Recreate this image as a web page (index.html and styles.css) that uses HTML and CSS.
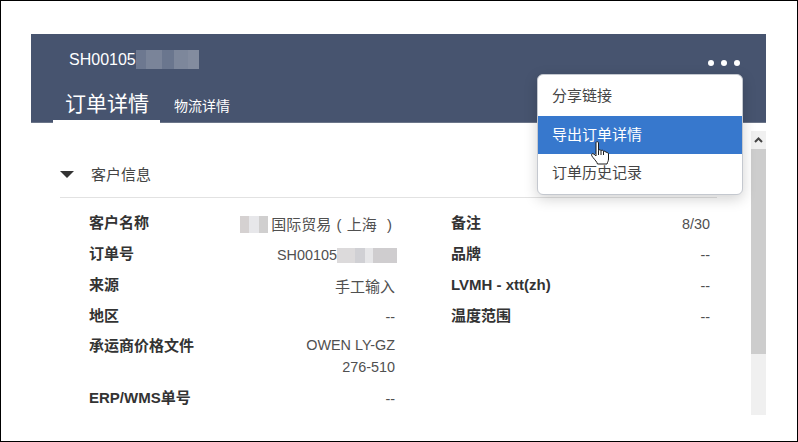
FILE: index.html
```html
<!DOCTYPE html>
<html lang="zh-CN">
<head>
<meta charset="utf-8">
<title>订单详情</title>
<link rel="stylesheet" href="styles.css">
</head>
<body>
<div class="frame">
  <div class="card">
    <header class="header">
      <div class="title-row">
        <span class="order-no">SH00105</span><span class="blur blur-head"></span>
        <div class="dots"><i></i><i></i><i></i></div>
      </div>
      <nav class="tabs">
        <a class="tab tab-active">订单详情</a>
        <a class="tab">物流详情</a>
      </nav>
    </header>
    <div class="body">
      <main class="content">
        <div class="section-head">
          <span class="caret"></span>
          <span class="section-title">客户信息</span>
        </div>
        <div class="columns">
          <div class="col col-left">
            <div class="row"><span class="label">客户名称</span><span class="value zh zh-name"><span class="blur blur-name"></span>国际贸易 ( 上海&nbsp; )</span></div>
            <div class="row"><span class="label">订单号</span><span class="value">SH00105<span class="blur blur-no"></span></span></div>
            <div class="row"><span class="label">来源</span><span class="value zh">手工输入</span></div>
            <div class="row"><span class="label">地区</span><span class="value">--</span></div>
            <div class="row row-tall"><span class="label">承运商价格文件</span><span class="value value-flush">OWEN LY-GZ<br>276-510</span></div>
            <div class="row"><span class="label">ERP/WMS单号</span><span class="value">--</span></div>
          </div>
          <div class="col col-right">
            <div class="row"><span class="label">备注</span><span class="value">8/30</span></div>
            <div class="row"><span class="label">品牌</span><span class="value">--</span></div>
            <div class="row"><span class="label">LVMH - xtt(zh)</span><span class="value">--</span></div>
            <div class="row"><span class="label">温度范围</span><span class="value">--</span></div>
          </div>
        </div>
      </main>
      <aside class="scrollbar">
        <div class="scroll-up"><svg width="9" height="6" viewBox="0 0 9 6"><path d="M1 5 L4.5 1.5 L8 5" fill="none" stroke="#444" stroke-width="2"/></svg></div>
        <div class="scroll-thumb"></div>
      </aside>
    </div>
    <div class="menu">
      <div class="menu-item">分享链接</div>
      <div class="menu-item menu-item-active">导出订单详情</div>
      <div class="menu-item">订单历史记录</div>
    </div>
    <svg class="cursor" width="20" height="25" viewBox="0 0 20 25">
      <path d="M6 1.5 C6 .5 8.5 .5 8.5 1.5 V9.5 C9 8.5 11 8.5 11 9.7 C11.5 9 13.5 9 13.5 10.5 C14 10 16 10 16 11.5 C16.5 11 18.5 11.5 18.5 13 V18 C18.5 20 17.5 21 17 23 H7.5 C7 21 5 19 3 16.5 C1.5 14.5 1 13.5 2 12.8 C3 12 5 14 6 15 Z" fill="#fff" stroke="#1a1a1a" stroke-width="1"/>
      <path d="M8.5 9.5 V14 M11 9.7 V14 M13.5 10.5 V14" stroke="#1a1a1a" stroke-width="1" fill="none"/>
    </svg>
  </div>
</div>
</body>
</html>
```

FILE: styles.css
```css
* { box-sizing: border-box; }
html, body { margin: 0; padding: 0; background: #fff; }
body {
  font-family: "Liberation Sans", "Noto Sans CJK SC", sans-serif;
  font-size: 14.4px;
  color: #505050;
  overflow: hidden;
}
.frame {
  width: 798px;
  height: 442px;
  border: 1px solid #000;
  padding: 33px 31px 0 30px;
}
.card {
  position: relative;
  width: 735px;
  height: 381px;
}
.header {
  height: 89px;
  background: #47546f;
  padding: 16px 26px 0 22px;
  display: flex;
  flex-direction: column;
  border-bottom: 1px solid #6b7589;
}
.title-row {
  display: flex;
  align-items: center;
  height: 19px;
  padding-left: 16px;
}
.order-no { color: #fff; font-size: 16px; }
.blur { display: inline-block; vertical-align: middle; }
.blur-head {
  width: 63px;
  height: 19px;
  background: linear-gradient(90deg, #6d7890 0 10px, #7a8499 10px 26px, #6a768e 26px 38px, #7d879b 38px 52px, #838c9f 52px 63px);
}
.dots { margin-left: auto; display: flex; gap: 7px; margin-top: 6px; }
.dots i { width: 6px; height: 6px; border-radius: 50%; background: #fff; }
.tabs {
  margin-top: auto;
  display: flex;
  align-items: flex-end;
  height: 39px;
  margin-bottom: -1px;
}
.tab { color: #fff; font-size: 14px; padding: 0 0 6px 14px; line-height: 22px; }
.tab-active {
  font-size: 21px;
  width: 107px;
  padding: 3px 0 0 12px;
  line-height: 33px;
  border-bottom: 3px solid #fff;
}
.body { display: flex; height: 292px; }
.content { width: 720px; padding: 38px 34px 0 29px; }
.section-head {
  display: flex;
  align-items: center;
  height: 37px;
  border-bottom: 1px solid #e2e2e2;
  padding-bottom: 12px;
}
.caret {
  width: 0;
  height: 0;
  margin-top: 2px;
  border-left: 7.5px solid transparent;
  border-right: 7.5px solid transparent;
  border-top: 7px solid #333;
}
.section-title { margin-left: 17px; font-size: 15px; color: #444; }
.columns { display: flex; gap: 56px; padding: 14px 0 0 29px; }
.col-left { width: 306px; }
.col-right { width: 259px; }
.row {
  display: flex;
  justify-content: space-between;
  margin-bottom: 10px;
  line-height: 21px;
}
.row-tall { margin-top: -1px; margin-bottom: 9px; }
.label { font-weight: 700; font-size: 15px; color: #333; }
.value { text-align: right; padding-top: 2px; margin-bottom: -2px; }
.value-flush { padding-top: 0; margin-bottom: 0; line-height: 21.5px; }
.zh { font-size: 15px; }
.zh-name { padding-right: 3px; word-spacing: 1px; }
.blur-name {
  width: 28px;
  height: 17px;
  margin-top: -3px;
  margin-right: 3px;
  background: linear-gradient(90deg, #d5d1d1 0 9px, #e7e7ea 9px 19px, #d0cfcf 19px 28px);
}
.blur-no {
  width: 60px;
  height: 15px;
  margin-top: -2px;
  margin-right: -2px;
  background: linear-gradient(90deg, #dcdadb 0 18px, #d0d0d4 18px 28px, #e6e6e8 28px 36px, #cfcdcf 36px 60px);
}
.scrollbar { width: 15px; margin-top: 8px; height: 284px; background: #f0f0f0; }
.scroll-up { height: 18px; display: flex; align-items: center; justify-content: center; }
.scroll-thumb { height: 205px; background: #cdcdcd; }
.menu {
  position: absolute;
  left: 506px;
  top: 40px;
  width: 206px;
  height: 121px;
  background: #fff;
  border: 1px solid #c4c8cf;
  border-radius: 6px;
  box-shadow: 0 4px 14px rgba(0, 0, 0, .18);
  font-size: 15px;
  color: #444;
  overflow: hidden;
}
.menu-item { height: 38px; line-height: 38px; padding-left: 14px; }
.menu-item:first-child { height: 41px; line-height: 41px; }
.menu-item-active { background: #3778cd; color: #fff; }
.cursor { position: absolute; left: 559px; top: 107px; }
```
